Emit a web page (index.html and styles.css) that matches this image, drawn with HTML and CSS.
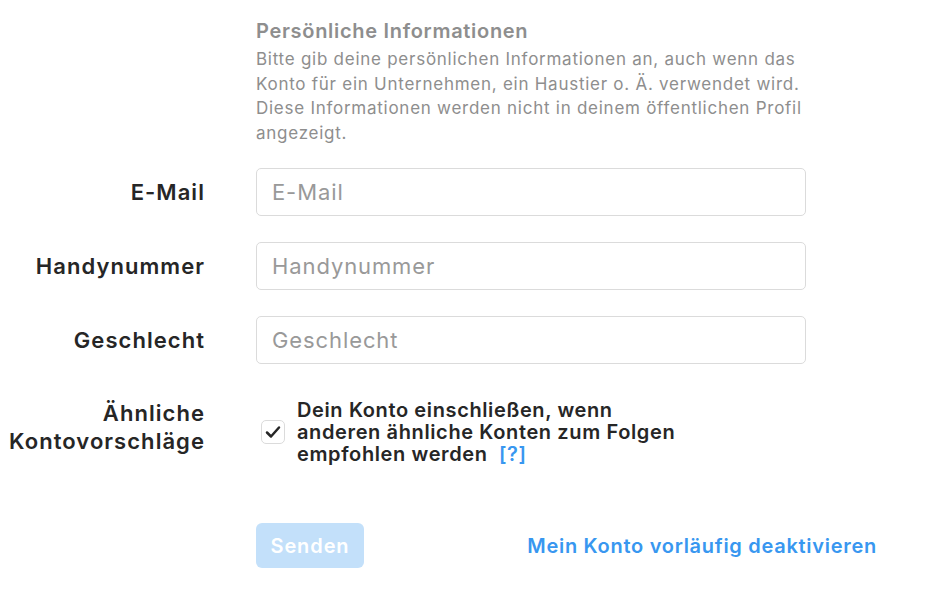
FILE: index.html
```html
<!DOCTYPE html>
<html lang="de">
<head>
<meta charset="utf-8">
<title>Profil bearbeiten</title>
<link rel="stylesheet" href="styles.css">
</head>
<body>
<form class="form">
  <div class="row row-info">
    <div class="label"></div>
    <div class="field">
      <h2 class="info-title">Persönliche Informationen</h2>
      <p class="info-text">Bitte gib deine persönlichen Informationen an, auch wenn das Konto für ein Unternehmen, ein Haustier o. Ä. verwendet wird. Diese Informationen werden nicht in deinem öffentlichen Profil angezeigt.</p>
    </div>
  </div>
  <div class="row row-input">
    <label class="label" for="email">E-Mail</label>
    <div class="field"><input class="input" id="email" type="text" placeholder="E-Mail"></div>
  </div>
  <div class="row row-input">
    <label class="label" for="phone">Handynummer</label>
    <div class="field"><input class="input" id="phone" type="text" placeholder="Handynummer"></div>
  </div>
  <div class="row row-input">
    <label class="label" for="gender">Geschlecht</label>
    <div class="field"><input class="input" id="gender" type="text" placeholder="Geschlecht"></div>
  </div>
  <div class="row row-check">
    <div class="label label-multi">Ähnliche Kontovorschläge</div>
    <div class="field check-field">
      <span class="checkbox">
        <svg width="16" height="14" viewBox="0 0 16 14"><path d="M2 7.5 L6 11.5 L14 2.5" fill="none" stroke="#262626" stroke-width="2.5" stroke-linecap="round" stroke-linejoin="round"/></svg>
      </span>
      <p class="check-text">Dein Konto einschließen, wenn anderen ähnliche Konten zum Folgen empfohlen werden&nbsp; <a class="help" href="#">[?]</a></p>
    </div>
  </div>
  <div class="row row-actions">
    <div class="label"></div>
    <div class="field actions">
      <button class="btn" type="button" disabled>Senden</button>
      <a class="deactivate" href="#">Mein Konto vorläufig deaktivieren</a>
    </div>
  </div>
</form>
</body>
</html>
```

FILE: styles.css
```css
* { box-sizing: border-box; }
html, body { margin: 0; padding: 0; background: #fff; }
body {
  font-family: Inter, "Noto Sans", "Liberation Sans", sans-serif;
  color: #262626;
  -webkit-font-smoothing: antialiased;
}
.form {
  padding: 18px 0 0 8px;
  display: flex;
  flex-direction: column;
}
.row {
  display: grid;
  grid-template-columns: 197px 550px;
  column-gap: 51px;
}
.label {
  text-align: right;
  font-weight: 600;
  font-size: 22px;
  line-height: 28px;
  letter-spacing: 1.05px;
  color: #262626;
}
.row-info { margin-bottom: 23px; }
.info-title {
  margin: 0;
  font-size: 20px;
  line-height: 26px;
  font-weight: 600;
  letter-spacing: 0.7px;
  color: #8e8e8e;
}
.info-text {
  margin: 3px 0 0;
  width: 558px;
  font-size: 17px;
  line-height: 24.5px;
  color: #8e8e8e;
  letter-spacing: 0.74px;
}
.row-input { margin-bottom: 26px; align-items: center; }
.input {
  display: block;
  width: 550px;
  height: 48px;
  border: 1px solid #dbdbdb;
  border-radius: 5px;
  padding: 0 15px;
  font-family: inherit;
  font-size: 22px;
  letter-spacing: 0.9px;
  color: #262626;
  background: #fff;
  outline: none;
}
.input::placeholder { color: #999; font-weight: 400; }
.row-check { margin-top: 9px; }
.label-multi { line-height: 28px; }
.check-field {
  display: flex;
  align-items: center;
  gap: 12px;
  padding-left: 5px;
}
.checkbox {
  flex: none;
  width: 24px;
  height: 24px;
  border: 1px solid #dbdbdb;
  border-radius: 5px;
  display: flex;
  align-items: center;
  justify-content: center;
}
.check-text {
  margin: 0;
  font-size: 20px;
  line-height: 22px;
  font-weight: 600;
  letter-spacing: 0.62px;
  color: #262626;
  width: 396px;
}
.help {
  color: #3897f0;
  text-decoration: none;
}
.row-actions { margin-top: 58px; }
.actions {
  display: flex;
  align-items: center;
  justify-content: space-between;
  width: 621px;
}
.btn {
  width: 108px;
  height: 45px;
  border: 0;
  border-radius: 6px;
  background: #c3e0fa;
  color: #fff;
  font-family: inherit;
  font-size: 20px;
  font-weight: 600;
  letter-spacing: 0.9px;
  padding: 0;
}
.deactivate {
  color: #3897f0;
  font-size: 20px;
  font-weight: 600;
  letter-spacing: 0.72px;
  text-decoration: none;
}
```
